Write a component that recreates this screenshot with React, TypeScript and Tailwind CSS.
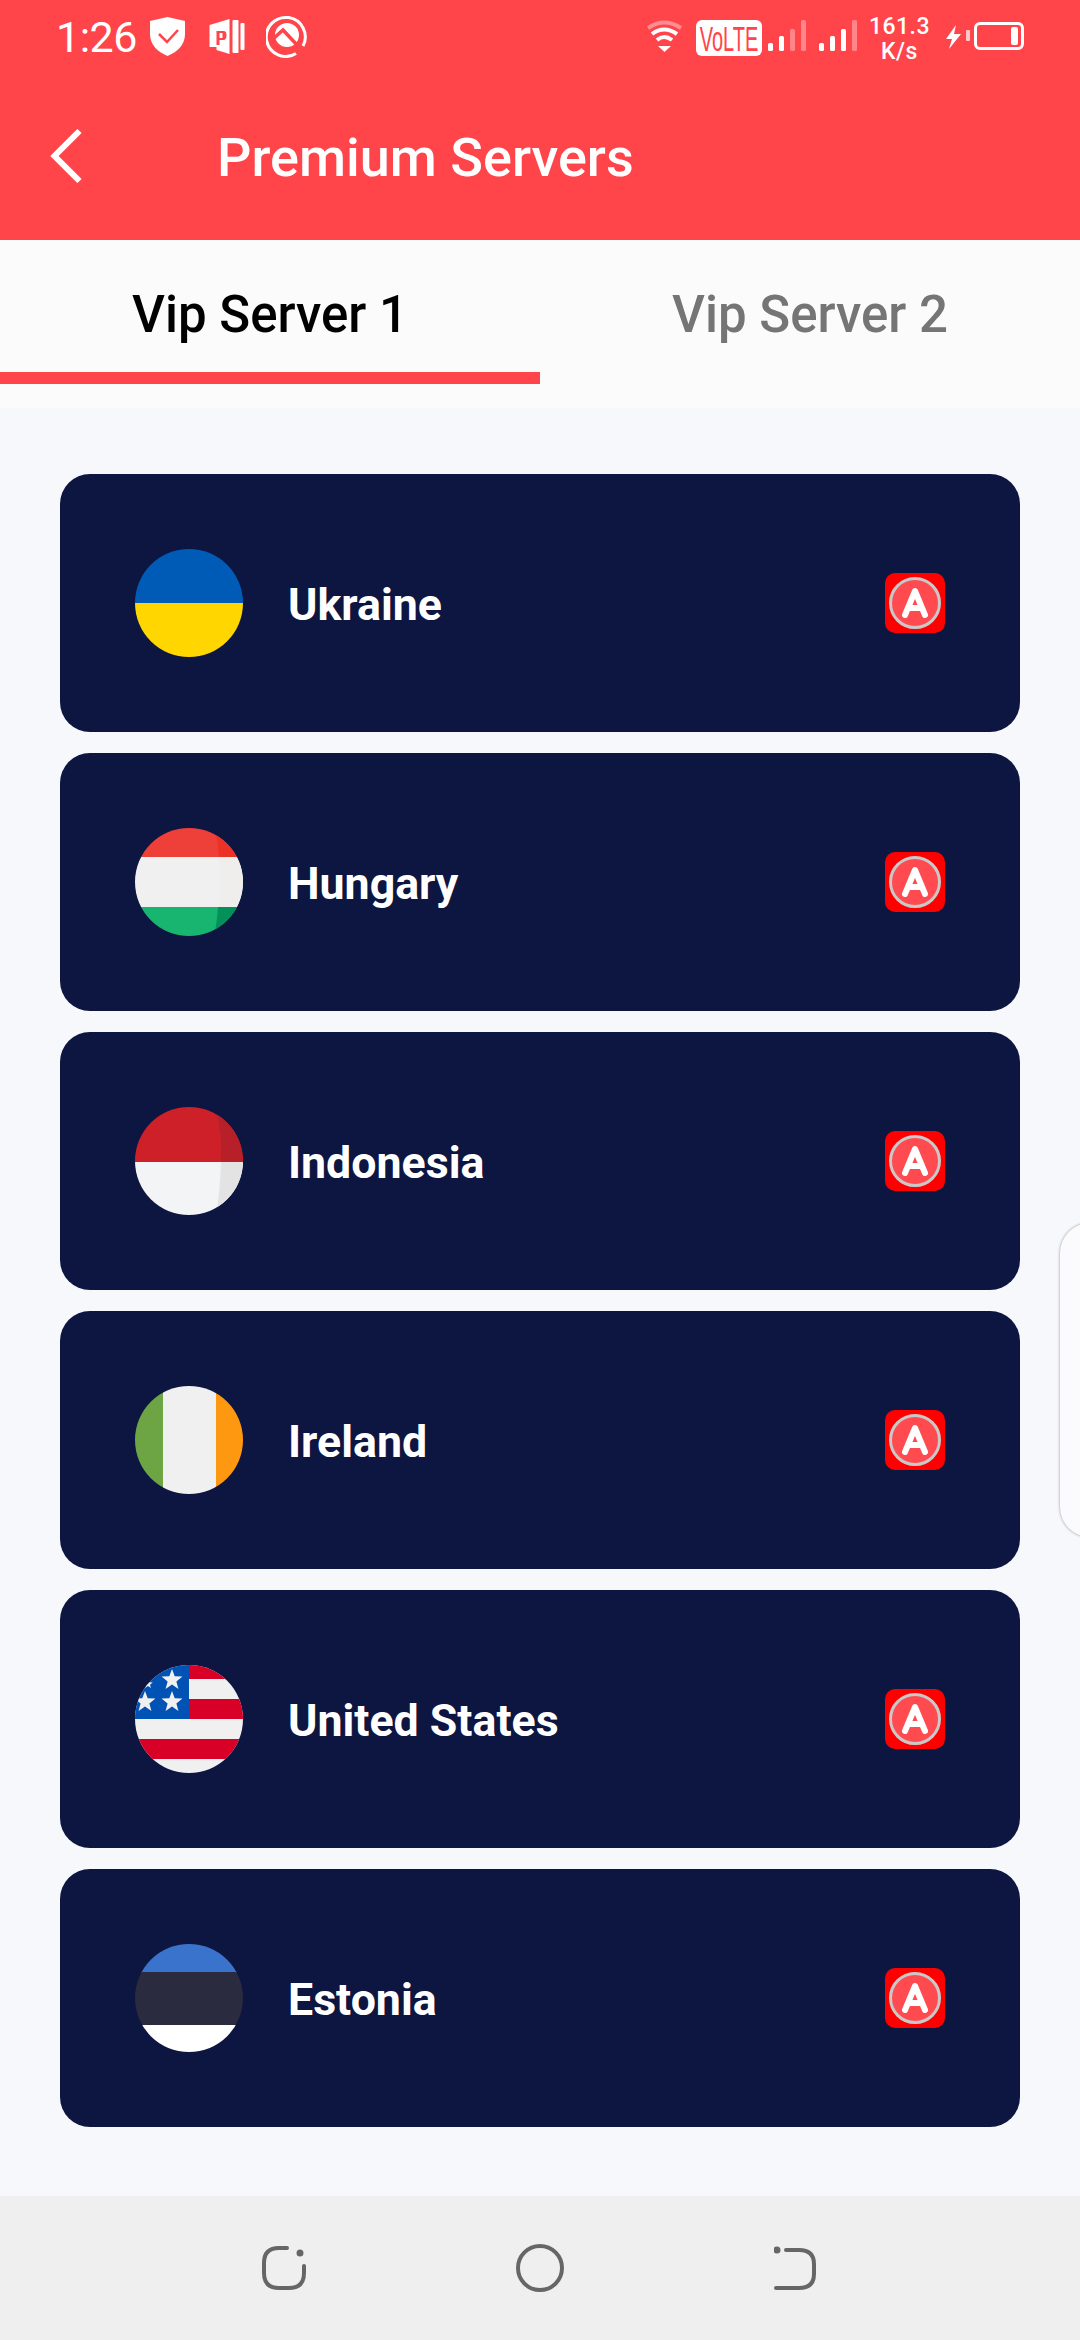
import React from 'react';

const servers = [
  { name: 'Ukraine', flag: 'ua' },
  { name: 'Hungary', flag: 'hu' },
  { name: 'Indonesia', flag: 'id' },
  { name: 'Ireland', flag: 'ie' },
  { name: 'United States', flag: 'us' },
  { name: 'Estonia', flag: 'ee' },
];

const Star: React.FC<{ x: number; y: number; r: number }> = ({ x, y, r }) => {
  const pts = Array.from({ length: 10 }, (_, i) => {
    const a = -Math.PI / 2 + (i * Math.PI) / 5;
    const d = i % 2 === 0 ? r : r * 0.42;
    return `${x + d * Math.cos(a)},${y + d * Math.sin(a)}`;
  }).join(' ');
  return <polygon points={pts} fill="#f0f0f0" />;
};

const Flag: React.FC<{ code: string }> = ({ code }) => {
  const id = `clip-${code}`;
  return (
    <svg width="108" height="108" viewBox="0 0 108 108" className="shrink-0">
      <clipPath id={id}>
        <circle cx="54" cy="54" r="54" />
      </clipPath>
      <g clipPath={`url(#${id})`}>
        {code === 'ua' && (
          <>
            <rect width="108" height="54" fill="#005bb7" />
            <rect y="54" width="108" height="54" fill="#ffd600" />
          </>
        )}
        {code === 'hu' && (
          <>
            <rect width="108" height="29" fill="#ee4039" />
            <rect y="29" width="108" height="50" fill="#f0f0f0" />
            <rect y="79" width="108" height="29" fill="#18b571" />
            <path d="M80 0 Q83 15 84 29 H108 V0 Z" fill="#ea3326" />
            <path d="M84 29 Q86 54 84 79 H108 V29 Z" fill="#efeeec" />
            <path d="M83 79 Q82 95 79 108 H108 V79 Z" fill="#03905b" />
          </>
        )}
        {code === 'id' && (
          <>
            <rect width="108" height="55" fill="#ce2029" />
            <rect y="55" width="108" height="53" fill="#f3f4f6" />
            <path d="M80 0 Q88 28 86 55 H108 V0 Z" fill="#b71f29" />
            <path d="M86 55 Q85 85 81 108 H108 V55 Z" fill="#e3e3e3" />
          </>
        )}
        {code === 'ie' && (
          <>
            <rect width="28" height="108" fill="#6da544" />
            <rect x="28" width="53" height="108" fill="#f0f0f0" />
            <rect x="81" width="27" height="108" fill="#ff9811" />
          </>
        )}
        {code === 'us' && (
          <>
            <rect width="108" height="108" fill="#f0f0f0" />
            <rect x="54" width="54" height="14" fill="#d80027" />
            <rect x="54" y="34" width="54" height="20" fill="#d80027" />
            <rect y="74" width="108" height="20" fill="#d80027" />
            <rect width="54" height="54" fill="#0052b4" />
            <Star x={37} y={15} r={11} />
            <Star x={10} y={37} r={11} />
            <Star x={37} y={37} r={11} />
            <Star x={13} y={19} r={5} />
          </>
        )}
        {code === 'ee' && (
          <>
            <rect width="108" height="29" fill="#3a73cb" />
            <rect y="28" width="108" height="53" fill="#2a2b3f" />
            <rect y="81" width="108" height="27" fill="#ffffff" />
          </>
        )}
      </g>
    </svg>
  );
};

const ProBadge = () => (
  <div className="w-[60px] h-[60px] rounded-[10px] bg-[#fe0000] flex items-center justify-center shrink-0">
    <svg width="54" height="54" viewBox="0 0 54 54">
      <circle cx="27" cy="27" r="24.5" fill="#ff4b50" stroke="#c9c9c9" strokeWidth="3" />
      <path d="M17 39 L27 15 L37 39 M21 32 H33" fill="none" stroke="#fff" strokeWidth="6" strokeLinecap="round" strokeLinejoin="round" />
    </svg>
  </div>
);

const SignalBars: React.FC<{ dim: number }> = ({ dim }) => (
  <svg width="39" height="32" viewBox="0 0 39 32" className="shrink-0">
    {[
      { x: 0, h: 8 },
      { x: 11, h: 15 },
      { x: 22, h: 22 },
      { x: 33, h: 31 },
    ].map((b, i) => (
      <rect key={i} x={b.x} y={31 - b.h} width="5" height={b.h} rx="1.5" fill="#fff" opacity={i >= dim ? 0.35 : 1} />
    ))}
  </svg>
);

const StatusBar = () => (
  <div className="h-[72px] relative flex items-center text-white pl-[56px]">
    <span className="text-[43px] leading-none tracking-[-0.5px] w-[94px] mt-[2px]">1:26</span>
    {/* shield */}
    <svg width="35" height="39" viewBox="0 0 35 39" className="shrink-0">
      <path d="M17.5 0 L35 4 V17 C35 28 27 35 17.5 39 C8 35 0 28 0 17 V4 Z" fill="#fff" />
      <path d="M9 17 L17 25 L28 13" fill="none" stroke="#ff444a" strokeWidth="2.5" />
    </svg>
    {/* publisher style P */}
    <svg width="36" height="36" viewBox="0 0 35 36" className="shrink-0 ml-[24px]">
      <path d="M0 7 L20 1 V36 L7 32 V29 L0 29 Z" fill="#fff" />
      <path d="M7 13 H14 Q17 13 17 17 Q17 22 14 22 H10 V27 H7 Z" fill="#ff444a" />
      <path d="M10 15 H13 V20 H10 Z" fill="#fff" />
      <rect x="23" y="2" width="6" height="33" rx="1" fill="#fff" />
      <rect x="31" y="5" width="4" height="27" rx="1" fill="#fff" />
    </svg>
    {/* round Q */}
    <svg width="42" height="44" viewBox="0 0 42 44" className="shrink-0 ml-[21px]">
      <path d="M30 39.5 A19.5 19.5 0 1 1 37 32" fill="none" stroke="#fff" strokeWidth="3" />
      <circle cx="21" cy="21" r="12" fill="#fff" />
      <polyline points="7,25 17,16 32,32" fill="none" stroke="#ff444a" strokeWidth="3.5" />
      <path d="M26 34 L34 26 V34 Z" fill="#ff444a" />
    </svg>
    <div className="absolute left-[646px] top-[20px] flex items-start">
      <svg width="37" height="32" viewBox="0 0 37 32" className="shrink-0">
        <path d="M2 8 Q18 -3 35 8" fill="none" stroke="#fff" strokeOpacity="0.4" strokeWidth="4" />
        <path d="M6 14 Q18 5 31 14" fill="none" stroke="#fff" strokeWidth="4" />
        <path d="M11 20 Q18 14 26 20" fill="none" stroke="#fff" strokeWidth="4" />
        <path d="M12 26 H25 L18.5 32 Z" fill="#fff" />
      </svg>
      <div className="ml-[13px] w-[66px] h-[36px] bg-white rounded-[6px] flex items-center justify-center text-[#ff444a]">
        <span className="font-['Liberation_Sans',sans-serif] text-[20px] leading-none scale-y-[1.8] whitespace-nowrap">VoLTE</span>
      </div>
      <div className="ml-[6px]">
        <SignalBars dim={2} />
      </div>
      <div className="ml-[12px]">
        <SignalBars dim={3} />
      </div>
      <div className="ml-[11px] -mt-[6px] w-[61px] flex flex-col items-center text-[23px] leading-[25px] font-medium tracking-[0.5px]">
        <span>161.3</span>
        <span>K/s</span>
      </div>
      <svg width="15" height="24" viewBox="0 0 15 24" className="shrink-0 ml-[16px] mt-[5px]">
        <path d="M10 0 L0 14 H6 L3 24 L15 9 H8 Z" fill="#fff" />
      </svg>
      <div className="ml-[5px] mt-[10px] w-[4px] h-[11px] bg-white opacity-70 rounded-[1px]" />
      <div className="ml-[4px] mt-[2px] w-[50px] h-[28px] rounded-[6px] border-[3px] border-white flex justify-end items-center pr-[3px]">
        <div className="w-[7px] h-[18px] bg-white rounded-[2px]" />
      </div>
    </div>
  </div>
);

export default function App() {
  return (
    <div className="relative w-[1080px] h-[2340px] overflow-hidden flex flex-col bg-[#f6f8fc] font-['Roboto',sans-serif]">
      <header className="h-[240px] bg-[#ff444a] shrink-0">
        <StatusBar />
        <div className="h-[168px] flex items-start pt-[57px] pl-[50px] text-white">
          <svg width="33" height="54" viewBox="0 0 32 54" className="shrink-0">
            <polyline points="29,2 4,27 29,52" fill="none" stroke="#fff" strokeWidth="6" />
          </svg>
          <h1 className="ml-[134px] -mt-[1px] text-[54px] leading-[60px] font-medium whitespace-nowrap">Premium Servers</h1>
        </div>
      </header>

      <div className="h-[168px] bg-[#fbfbfb] shrink-0 relative grid grid-cols-2">
        <div className="h-[150px] flex items-center justify-center text-[51px] font-medium text-black">Vip Server 1</div>
        <div className="h-[150px] flex items-center justify-center text-[51px] font-medium text-[#757575]">Vip Server 2</div>
        <div className="absolute left-0 top-[132px] w-[540px] h-[12px] bg-[#ff444a]" />
      </div>

      <main className="flex-1 px-[60px] pt-[66px] flex flex-col gap-[21px]">
        {servers.map((s) => (
          <div key={s.name} className="h-[258px] rounded-[30px] bg-[#0d1541] px-[75px] flex items-center shrink-0">
            <Flag code={s.flag} />
            <span className="ml-[45px] mt-[5px] flex-1 text-[44.7px] font-bold text-white">{s.name}</span>
            <ProBadge />
          </div>
        ))}
      </main>

      <nav className="h-[144px] bg-[#efefef] shrink-0 flex items-center justify-center gap-[210px]">
        <svg width="44" height="44" viewBox="0 0 44 44" fill="none" stroke="#666" strokeWidth="4" strokeLinecap="round">
          <path d="M25 2 H17 Q2 2 2 17 V27 Q2 42 17 42 H27 Q42 42 42 27 V20" />
          <circle cx="38" cy="7" r="1.5" fill="#666" />
        </svg>
        <svg width="48" height="48" viewBox="0 0 48 48" fill="none" stroke="#666" strokeWidth="4">
          <circle cx="24" cy="24" r="22" />
        </svg>
        <svg width="44" height="44" viewBox="0 0 44 44" fill="none" stroke="#666" strokeWidth="4" strokeLinecap="round">
          <path d="M12 4 H25 Q40 4 40 18 V28 Q40 42 25 42 H2" />
          <circle cx="3" cy="4" r="1.5" fill="#666" />
        </svg>
      </nav>

      {/* edge handle floating over the list */}
      <div className="absolute left-[1060px] top-[1223px] w-[60px] h-[314px] rounded-[30px] bg-[#fbfbfe] shadow-[0_0_3px_rgba(0,0,0,0.4)]" />
    </div>
  );
}
